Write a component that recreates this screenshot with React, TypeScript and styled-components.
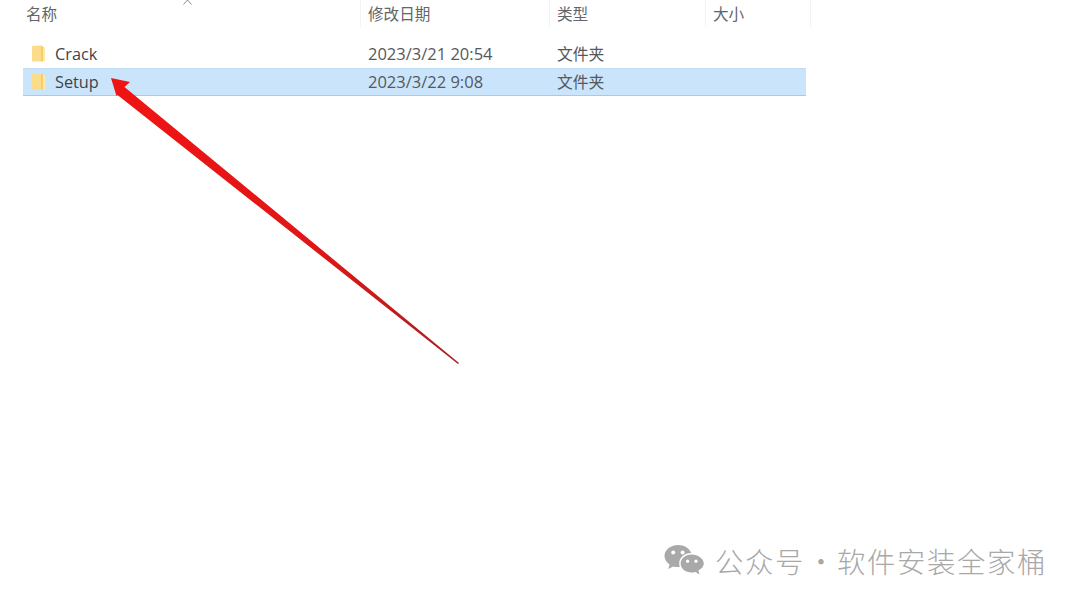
import styled, { createGlobalStyle } from 'styled-components'

const GlobalStyle = createGlobalStyle`
  html, body {
    margin: 0;
    padding: 0;
    background: #fff;
  }
`

const COLUMNS = '338px 189px 156px 105px'

const Page = styled.div`
  position: relative;
  width: 1080px;
  height: 605px;
  overflow: hidden;
  display: flex;
  flex-direction: column;
  background: #fff;
  font-family: 'Open Sans', 'Noto Sans', 'Noto Sans CJK SC', sans-serif;
  color: #444;
`

const FileList = styled.div`
  width: 788px;
  margin-left: 23px;
  display: flex;
  flex-direction: column;
`

const HeaderRow = styled.div`
  display: grid;
  grid-template-columns: ${COLUMNS};
  height: 27px;
  margin-bottom: 13px;
`

const HeaderCell = styled.div<{ $first?: boolean }>`
  display: flex;
  align-items: center;
  padding-left: ${p => (p.$first ? '3px' : '7px')};
  padding-bottom: 1px;
  font-family: 'Noto Sans CJK SC', sans-serif;
  font-size: 15.6px;
  color: #62666b;
  border-right: 1px solid #f3f3f3;
`

const Row = styled.div<{ $selected?: boolean }>`
  display: grid;
  grid-template-columns: ${COLUMNS};
  width: 783px;
  height: 28px;
  box-sizing: border-box;
  background: ${p => (p.$selected ? '#cae5fb' : 'transparent')};
  border-top: 1px solid ${p => (p.$selected ? '#bfdcf3' : 'transparent')};
  border-bottom: 1px solid ${p => (p.$selected ? '#a5cbe6' : 'transparent')};
`

const NameCell = styled.div`
  display: flex;
  align-items: center;
  gap: 8px;
  padding-left: 8px;
  color: #3f4347;
  font-size: 16.3px;
`

const Cell = styled.div<{ $cjk?: boolean }>`
  display: flex;
  align-items: center;
  padding-left: 7px;
  color: #55585c;
  font-family: ${p => (p.$cjk ? "'Noto Sans CJK SC', sans-serif" : 'inherit')};
  font-size: ${p => (p.$cjk ? '15.8px' : '16.5px')};
  line-height: 24px;
`

const SortMark = styled.svg`
  position: absolute;
  left: 183px;
  top: 0;
`

const Arrow = styled.svg`
  position: absolute;
  left: 0;
  top: 0;
  pointer-events: none;
`

const Watermark = styled.div`
  margin-top: auto;
  margin-bottom: 24px;
  margin-right: 33px;
  align-self: flex-end;
  display: flex;
  align-items: center;
  gap: 10px;
  font-family: 'Noto Sans CJK SC', sans-serif;
  font-size: 28.4px;
  line-height: 40px;
  letter-spacing: 1.6px;
  color: #a8a8a8;
  font-weight: 300;
`

const WatermarkDot = styled.span`
  display: inline-block;
  width: 32px;
  text-align: center;
  letter-spacing: 0;
  font-weight: 300;
`

function FolderIcon() {
  return (
    <svg width="16" height="18" viewBox="0 0 16 18">
      <path d="M1 1 L10 0.5 L10 16.5 L2 16.5 Q1 16.5 1 15.5 Z" fill="#fbdc8a" />
      <path d="M10 0.5 L12 1.5 L12 16.5 L10 16.5 Z" fill="#f7cd66" />
      <path d="M12 2 L14 2 L14 16 L12 16.5 Z" fill="#fde8ac" />
    </svg>
  )
}

function WechatIcon() {
  return (
    <svg width="41" height="34" viewBox="0 0 41 34">
      <path d="M14 1 C6.3 1 0.5 6 0.5 12 C0.5 15.6 2.5 18.4 5.6 20.6 L4.2 25 L9.2 22.4 C10.8 22.9 12.4 23.1 14 23.1 C14.6 23.1 15.2 23.1 15.8 23 C15.4 21.8 15.2 20.7 15.2 19.5 C15.2 13.5 20.6 9 27.2 9 C25.6 4.4 20.4 1 14 1 Z" fill="#a9a9a9" />
      <path d="M27.6 10.6 C21.4 10.6 16.6 14.6 16.6 19.6 C16.6 24.6 21.4 28.6 27.6 28.6 C28.9 28.6 30.2 28.4 31.4 28 L35.6 30.4 L34.4 26.6 C37.6 24.8 39.8 22.4 39.8 19.6 C39.8 14.6 33.8 10.6 27.6 10.6 Z" fill="#a9a9a9" />
      <circle cx="9.2" cy="8.4" r="2" fill="#fff" />
      <circle cx="18.6" cy="8.4" r="2" fill="#fff" />
      <circle cx="23.6" cy="17.2" r="1.6" fill="#fff" />
      <circle cx="32" cy="17.2" r="1.6" fill="#fff" />
    </svg>
  )
}

const files = [
  { name: 'Crack', date: '2023/3/21 20:54', type: '文件夹' },
  { name: 'Setup', date: '2023/3/22 9:08', type: '文件夹', selected: true },
]

export default function App() {
  return (
    <Page>
      <GlobalStyle />
      <FileList>
        <HeaderRow>
          <HeaderCell $first>名称</HeaderCell>
          <HeaderCell>修改日期</HeaderCell>
          <HeaderCell>类型</HeaderCell>
          <HeaderCell>大小</HeaderCell>
        </HeaderRow>
        {files.map(f => (
          <Row key={f.name} $selected={f.selected}>
            <NameCell>
              <FolderIcon />
              {f.name}
            </NameCell>
            <Cell>{f.date}</Cell>
            <Cell $cjk>{f.type}</Cell>
            <Cell />
          </Row>
        ))}
      </FileList>
      <Watermark>
        <WechatIcon />
        <span>
          公众号<WatermarkDot>·</WatermarkDot>软件安装全家桶
        </span>
      </Watermark>
      <SortMark width="9" height="5" viewBox="0 0 9 5">
        <path d="M0.5 4.5 L4.5 0 L8.5 4.5" fill="none" stroke="#8a8a8a" strokeWidth="1" />
      </SortMark>
      <Arrow width="1080" height="605" viewBox="0 0 1080 605">
        <defs>
          <linearGradient id="shaft" x1="111" y1="78" x2="458" y2="363" gradientUnits="userSpaceOnUse">
            <stop offset="0" stopColor="#f01414" />
            <stop offset="0.6" stopColor="#e01616" />
            <stop offset="1" stopColor="#a82020" />
          </linearGradient>
        </defs>
        <path
          d="M111 78 L130 82 L124.5 87 L459 363 L458 364 L117.5 95 L116.5 96 Z"
          fill="url(#shaft)"
        />
      </Arrow>
    </Page>
  )
}
